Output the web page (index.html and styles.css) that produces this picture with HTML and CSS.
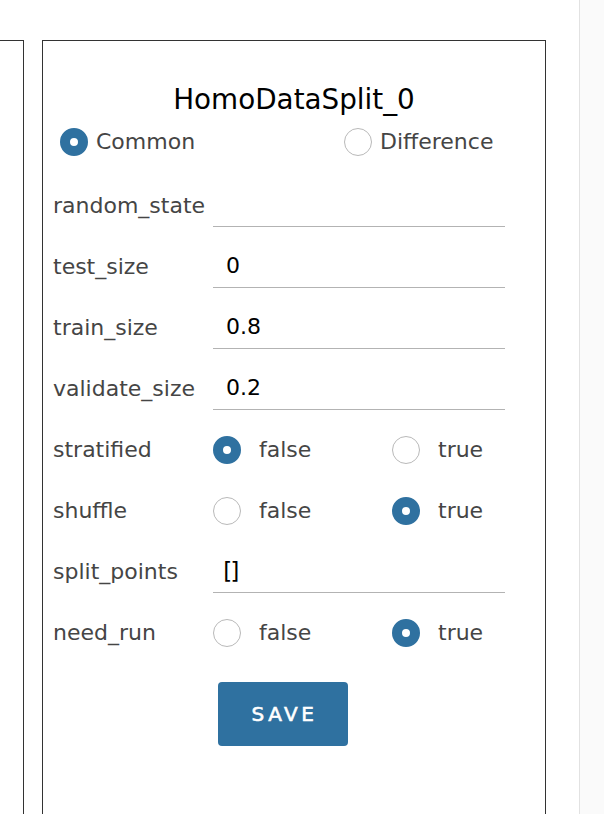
FILE: index.html
```html
<!DOCTYPE html>
<html lang="en">
<head>
<meta charset="utf-8">
<title>HomoDataSplit_0</title>
<link rel="stylesheet" href="styles.css">
</head>
<body>
<div class="page">
  <div class="workspace">
    <div class="panel panel-prev"></div>
    <div class="panel panel-main">
      <h1 class="title">HomoDataSplit_0</h1>
      <div class="mode">
        <label class="opt opt-head"><span class="radio checked"></span>Common</label>
        <label class="opt opt-head"><span class="radio"></span>Difference</label>
      </div>
      <div class="form">
        <div class="row">
          <span class="label">random_state</span>
          <div class="field"></div>
        </div>
        <div class="row">
          <span class="label">test_size</span>
          <div class="field">0</div>
        </div>
        <div class="row">
          <span class="label">train_size</span>
          <div class="field">0.8</div>
        </div>
        <div class="row">
          <span class="label">validate_size</span>
          <div class="field">0.2</div>
        </div>
        <div class="row">
          <span class="label">stratified</span>
          <div class="choices">
            <label class="opt"><span class="radio checked"></span>false</label>
            <label class="opt"><span class="radio"></span>true</label>
          </div>
        </div>
        <div class="row">
          <span class="label">shuffle</span>
          <div class="choices">
            <label class="opt"><span class="radio"></span>false</label>
            <label class="opt"><span class="radio checked"></span>true</label>
          </div>
        </div>
        <div class="row">
          <span class="label">split_points</span>
          <div class="field field-mono">[]</div>
        </div>
        <div class="row">
          <span class="label">need_run</span>
          <div class="choices">
            <label class="opt"><span class="radio"></span>false</label>
            <label class="opt"><span class="radio checked"></span>true</label>
          </div>
        </div>
      </div>
      <button class="save" type="button">SAVE</button>
    </div>
  </div>
  <div class="sidebar"></div>
</div>
</body>
</html>
```
FILE: styles.css
```css
html, body {
  margin: 0;
  padding: 0;
  overflow: hidden;
  background: #ffffff;
}

body {
  font-family: "DejaVu Sans", "Liberation Sans", sans-serif;
  font-size: 22px;
  color: #454545;
}

.page {
  display: flex;
  height: 814px;
}

.workspace {
  flex: 1;
  display: flex;
  gap: 18px;
  padding-top: 40px;
}

.panel {
  box-sizing: border-box;
  border: 1px solid #333333;
  border-bottom: none;
  height: 774px;
}

.panel-prev {
  width: 24px;
  border-left: none;
}

.panel-main {
  width: 504px;
  padding-top: 42px;
}

.sidebar {
  width: 24px;
  border-left: 1px solid #e2e2e2;
  background: #fafafa;
}

.title {
  margin: 0;
  font-size: 27.8px;
  font-weight: normal;
  line-height: 34px;
  color: #000000;
  text-align: center;
}

.mode {
  display: grid;
  grid-template-columns: 284px auto;
  padding-left: 17px;
  margin-top: 11px;
  height: 28px;
}

.opt {
  display: inline-flex;
  align-items: center;
  gap: 18px;
  line-height: 28px;
  color: #454545;
}

.opt-head {
  gap: 8px;
}

.radio {
  box-sizing: border-box;
  width: 28px;
  height: 28px;
  border-radius: 50%;
  border: 1px solid #b9b9b9;
  background: #ffffff;
  flex: none;
}

.radio.checked {
  border: 10px solid #2f71a0;
}

.form {
  margin-top: 29px;
  padding-left: 10px;
  display: flex;
  flex-direction: column;
  gap: 19px;
}

.row {
  display: grid;
  grid-template-columns: 160px 292px;
  align-items: center;
  height: 42px;
}

.label {
  color: #454545;
  white-space: nowrap;
  padding-bottom: 2px;
}

.field {
  box-sizing: border-box;
  height: 42px;
  padding-left: 13px;
  padding-top: 1px;
  line-height: 38px;
  border-bottom: 1px solid #b3b3b3;
  color: #000000;
}

.field-mono {
  font-family: "DejaVu Sans Mono", "Liberation Mono", monospace;
  font-size: 23px;
  letter-spacing: -5px;
  padding-left: 7px;
}

.choices {
  display: grid;
  grid-template-columns: 179px auto;
  align-items: center;
}

.save {
  display: block;
  margin: 28px 0 0 175px;
  width: 130px;
  height: 64px;
  border: none;
  border-radius: 4px;
  background: #2f71a0;
  color: #ffffff;
  font-family: "DejaVu Sans", "Liberation Sans", sans-serif;
  font-size: 20px;
  font-weight: normal;
  -webkit-text-stroke: 0.6px #ffffff;
  letter-spacing: 3.5px;
  padding: 0 0 0 3px;
}
```
